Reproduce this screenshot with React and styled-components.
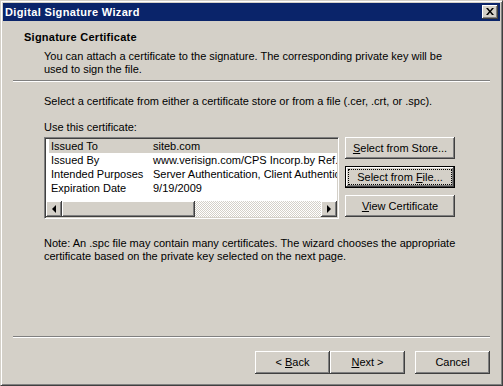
import React from 'react';
import styled, { createGlobalStyle } from 'styled-components';

const GlobalStyle = createGlobalStyle`
  html, body {
    margin: 0;
    padding: 0;
    background: #d4d0c8;
  }
  * {
    box-sizing: border-box;
  }
`;

const face = '#d4d0c8';

const Window = styled.div`
  width: 503px;
  height: 386px;
  display: flex;
  flex-direction: column;
  padding: 1px;
  background: ${face};
  border: 1px solid;
  border-color: ${face} #404040 #404040 ${face};
  box-shadow: inset 1px 1px #fff, inset -1px -1px #808080;
  font-family: 'Liberation Sans', Arial, sans-serif;
  font-size: 11px;
  line-height: 13px;
  color: #000;
`;

const TitleBar = styled.div`
  height: 18px;
  margin: 1px 1px 0 1px;
  display: flex;
  align-items: center;
  justify-content: space-between;
  padding: 0 2px 0 2px;
  background: #0a246a;
  color: #fff;
  font-weight: bold;
`;

const TitleText = styled.span`
  font-size: 11px;
  letter-spacing: 0.35px;
`;

const raised = `
  background: ${face};
  border: none;
  box-shadow: inset -1px -1px #404040, inset 1px 1px #fff,
    inset -2px -2px #808080, inset 2px 2px ${face};
`;

const CloseButton = styled.div`
  ${raised}
  width: 16px;
  height: 14px;
  display: flex;
  align-items: center;
  justify-content: center;
  padding-bottom: 1px;
`;

const Header = styled.div`
  padding: 10px 0 0 22px;
`;

const HeaderTitle = styled.div`
  font-weight: bold;
  letter-spacing: 0.25px;
`;

const HeaderText = styled.div`
  margin: 6px 0 0 20px;
`;

const Separator = styled.div`
  margin: ${(p) => p.$top || 0}px 11px 0 11px;
  border-top: 1px solid #808080;
  border-bottom: 1px solid #fff;
`;

const Body = styled.div`
  flex: 1;
  padding: 13px 0 0 42px;
`;

const Para = styled.div`
  margin-top: ${(p) => p.$top || 0}px;
`;

const CertRow = styled.div`
  display: flex;
  gap: 6px;
  margin-top: 3px;
`;

const ListBox = styled.div`
  width: 295px;
  height: 82px;
  background: #fff;
  border: 1px solid;
  border-color: #808080 #fff #fff #808080;
  box-shadow: inset 1px 1px #404040, inset -1px -1px ${face};
  padding: 1px;
  display: flex;
  flex-direction: column;
`;

const Rows = styled.div`
  flex: 1;
  overflow: hidden;
`;

const Row = styled.div`
  display: flex;
  height: 14px;
  align-items: center;
  margin-left: 3px;
  padding-left: 2px;
  white-space: nowrap;
  overflow: hidden;
  background: ${(p) => (p.$selected ? face : 'transparent')};
`;

const Label = styled.span`
  flex: 0 0 102px;
`;

const Value = styled.span`
  flex: none;
`;

const HScroll = styled.div`
  height: 16px;
  display: flex;
`;

const ScrollButton = styled.div`
  ${raised}
  width: 16px;
  height: 16px;
  display: flex;
  align-items: center;
  justify-content: center;
`;

const Arrow = styled.div`
  width: 0;
  height: 0;
  border-top: 4px solid transparent;
  border-bottom: 4px solid transparent;
  ${(p) => (p.$dir === 'left' ? 'border-right: 4px solid #000;' : 'border-left: 4px solid #000;')}
`;

const Thumb = styled.div`
  ${raised}
  width: 133px;
`;

const Track = styled.div`
  flex: 1;
  background: repeating-conic-gradient(#fff 0 25%, ${face} 0 50%) 0 0 / 2px 2px;
`;

const ButtonColumn = styled.div`
  display: flex;
  flex-direction: column;
  gap: 7px;
`;

const Button = styled.div`
  ${raised}
  width: ${(p) => p.$w || 75}px;
  height: ${(p) => p.$h || 23}px;
  display: flex;
  align-items: center;
  justify-content: center;
  white-space: nowrap;
  ${(p) =>
    p.$default &&
    `
    border: 1px solid #000;
  `}
`;

const Focus = styled.span`
  display: flex;
  align-items: center;
  justify-content: center;
  width: calc(100% - 6px);
  height: calc(100% - 6px);
  outline: 1px dotted #000;
`;

const Footer = styled.div`
  display: flex;
  flex-direction: column;
`;

const FooterButtons = styled.div`
  display: flex;
  justify-content: flex-end;
  padding: 13px 11px 10px 0;
`;

const Gap = styled.div`
  width: 10px;
`;

export default function App() {
  return (
    <>
      <GlobalStyle />
      <Window>
        <TitleBar>
          <TitleText>Digital Signature Wizard</TitleText>
          <CloseButton>
            <svg width="8" height="7" viewBox="0 0 8 7">
              <path d="M0 0h2l2 2.5L6 0h2L5 3.5 8 7H6L4 4.5 2 7H0l3-3.5z" fill="#000" />
            </svg>
          </CloseButton>
        </TitleBar>
        <Header>
          <HeaderTitle>Signature Certificate</HeaderTitle>
          <HeaderText>
            You can attach a certificate to the signature. The corresponding private key will be
            <br />
            used to sign the file.
          </HeaderText>
        </Header>
        <Separator $top={4} />
        <Body>
          <Para>
            Select a certificate from either a certificate store or from a file (.cer, .crt, or .spc).
          </Para>
          <Para $top={13}>Use this certificate:</Para>
          <CertRow>
            <ListBox>
              <Rows>
                <Row $selected>
                  <Label>Issued To</Label>
                  <Value>siteb.com</Value>
                </Row>
                <Row>
                  <Label>Issued By</Label>
                  <Value>www.verisign.com/CPS Incorp.by Ref. LIABILITY LTD.</Value>
                </Row>
                <Row>
                  <Label>Intended Purposes</Label>
                  <Value>Server Authentication, Client Authentication</Value>
                </Row>
                <Row>
                  <Label>Expiration Date</Label>
                  <Value>9/19/2009</Value>
                </Row>
              </Rows>
              <HScroll>
                <ScrollButton>
                  <Arrow $dir="left" />
                </ScrollButton>
                <Thumb />
                <Track />
                <ScrollButton>
                  <Arrow $dir="right" />
                </ScrollButton>
              </HScroll>
            </ListBox>
            <ButtonColumn>
              <Button $w={110} $h={22}>
                <span>
                  <u>S</u>elect from Store...
                </span>
              </Button>
              <Button $w={110} $h={22} $default>
                <Focus>
                  <span>
                    Select from <u>F</u>ile...
                  </span>
                </Focus>
              </Button>
              <Button $w={110} $h={22}>
                <span>
                  <u>V</u>iew Certificate
                </span>
              </Button>
            </ButtonColumn>
          </CertRow>
          <Para $top={18}>
            Note: An .spc file may contain many certificates. The wizard chooses the appropriate
            <br />
            certificate based on the private key selected on the next page.
          </Para>
        </Body>
        <Footer>
          <Separator />
          <FooterButtons>
            <Button>
              <span>
                &lt; <u>B</u>ack
              </span>
            </Button>
            <Button>
              <span>
                <u>N</u>ext &gt;
              </span>
            </Button>
            <Gap />
            <Button>Cancel</Button>
          </FooterButtons>
        </Footer>
      </Window>
    </>
  );
}
